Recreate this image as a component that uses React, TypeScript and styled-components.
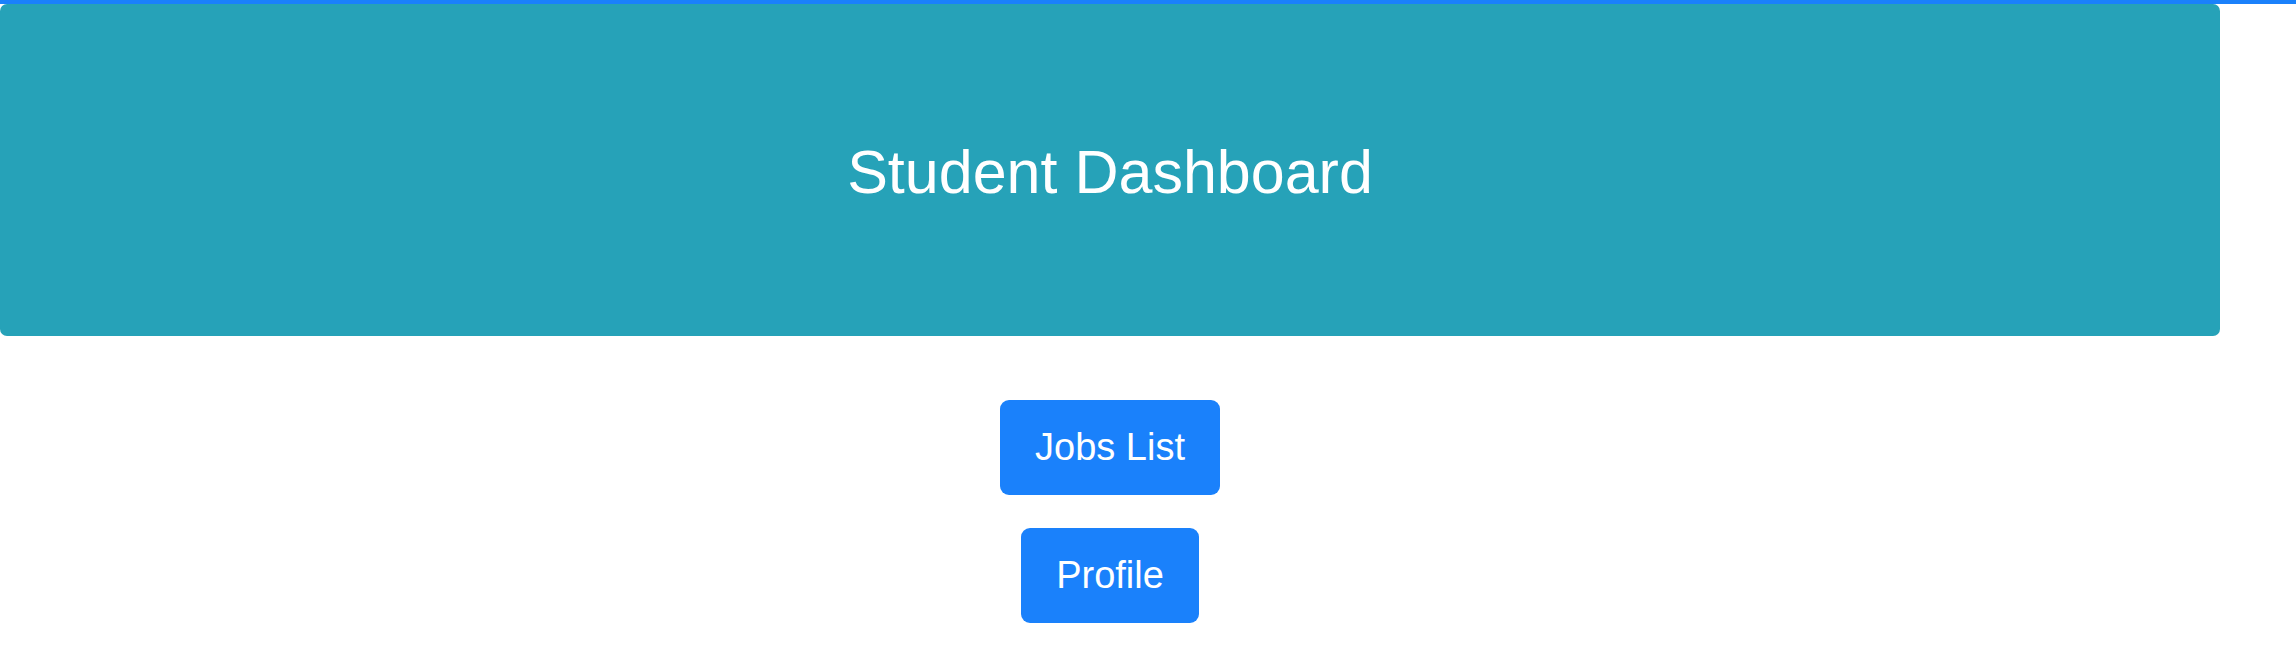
import React from 'react';
import styled, { createGlobalStyle } from 'styled-components';

const GlobalStyle = createGlobalStyle`
  html, body {
    margin: 0;
    padding: 0;
    background: #ffffff;
    font-family: "Liberation Sans", Arial, sans-serif;
  }
`;

const TopBar = styled.div`
  height: 4px;
  width: 100%;
  background-color: #1a81fb;
`;

const Page = styled.div`
  width: 2220px;
`;

const Banner = styled.header`
  box-sizing: border-box;
  height: 332px;
  padding-top: 6px;
  background-color: #26a2b8;
  border-radius: 7px;
  display: flex;
  align-items: center;
  justify-content: center;
`;

const Title = styled.h1`
  margin: 0;
  color: #ffffff;
  font-size: 61px;
  font-weight: 400;
  line-height: 1.2;
`;

const Actions = styled.nav`
  display: flex;
  flex-direction: column;
  align-items: center;
  gap: 33px;
  margin-top: 64px;
`;

const ActionButton = styled.button`
  border: none;
  background-color: #1a81fb;
  color: #ffffff;
  font-family: "Liberation Sans", Arial, sans-serif;
  font-size: 38px;
  line-height: 59px;
  padding: 18px 35px;
  border-radius: 9px;
  cursor: pointer;
`;

const App: React.FC = () => {
  return (
    <>
      <GlobalStyle />
      <TopBar />
      <Page>
        <Banner>
          <Title>Student Dashboard</Title>
        </Banner>
        <Actions>
          <ActionButton>Jobs List</ActionButton>
          <ActionButton>Profile</ActionButton>
        </Actions>
      </Page>
    </>
  );
};

export default App;
